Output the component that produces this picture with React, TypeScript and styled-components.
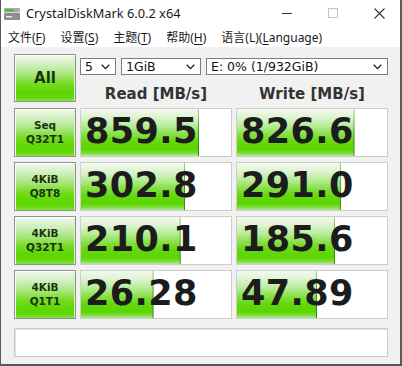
import React from "react";
import styled, { createGlobalStyle } from "styled-components";

const Global = createGlobalStyle`
  html, body { margin: 0; padding: 0; background: #ffffff; }
  body { width: 402px; height: 366px; overflow: hidden; }
`;

const Window = styled.div`
  width: 402px;
  height: 366px;
  box-sizing: border-box;
  display: flex;
  flex-direction: column;
  background: #ffffff;
  border-left: 1px solid #5a5a5a;
  border-right: 2px solid #5a5a5a;
  border-bottom: 2px solid #5a5a5a;
`;

const TitleBar = styled.div`
  height: 26px;
  display: flex;
  align-items: center;
  background: #ffffff;
`;

const AppIcon = styled.svg`
  width: 16px;
  height: 12px;
  margin-left: 3px;
  margin-top: 1px;
`;

const TitleText = styled.div`
  margin-left: 6px;
  flex: 1;
  font-family: "Noto Sans", "Open Sans", sans-serif;
  font-size: 12.8px;
  color: #1a1a1a;
  white-space: nowrap;
`;

const Controls = styled.div`
  display: flex;
  height: 100%;
  margin-right: -2px;
`;

const Control = styled.div`
  width: 46px;
  height: 100%;
  display: flex;
  align-items: center;
  justify-content: center;
`;

const MenuBar = styled.div`
  height: 21px;
  display: flex;
  align-items: center;
  gap: 15px;
  padding-left: 7px;
  background: #ffffff;
  font-family: "Noto Sans", "Noto Sans CJK SC", sans-serif;
  font-size: 12px;
  color: #1a1a1a;
`;

const MenuItem = styled.span`
  white-space: nowrap;
`;

const Key = styled.span`
  text-decoration: underline;
  text-underline-offset: 2px;
`;

const Content = styled.div`
  flex: 1;
  background: #f1f1f1;
  padding: 7px 0 0 13px;
  display: flex;
  flex-direction: column;
`;

const TopGrid = styled.div`
  display: grid;
  grid-template-columns: 62px 152px 152px;
  grid-template-rows: 21px 27px;
  column-gap: 4px;
`;

const greenButton = `
  box-sizing: border-box;
  border: 1px solid #8e948a;
  box-shadow: inset 0 1px 0 #ffffff, inset 1px 0 0 #f4fbf0, inset -1px 0 0 #d6f0c8;
  background: linear-gradient(
    to bottom,
    #f2f8ee 0%,
    #d6f1c6 18%,
    #a9e67e 42%,
    #74dc22 62%,
    #5fd604 80%,
    #62d808 92%,
    #86e046 100%
  );
  font-family: "DejaVu Sans", Verdana, sans-serif;
  font-weight: bold;
  color: #1b3410;
  display: flex;
  flex-direction: column;
  align-items: center;
  justify-content: center;
  text-align: center;
`;

const AllButton = styled.div`
  ${greenButton}
  grid-column: 1;
  grid-row: 1 / span 2;
  height: 48px;
  font-size: 15px;
  padding-bottom: 1px;
`;

const Selects = styled.div`
  grid-column: 2 / span 2;
  grid-row: 1;
  align-self: end;
  display: flex;
  gap: 5px;
`;

const Select = styled.div<{ $w: number }>`
  box-sizing: border-box;
  width: ${(p) => p.$w}px;
  height: 17px;
  background: #ffffff;
  border: 1px solid #7d7d7d;
  display: flex;
  align-items: center;
  justify-content: space-between;
  padding: 0 5px 0 4px;
  font-family: "DejaVu Sans", Verdana, sans-serif;
  font-size: 12.5px;
  color: #111111;
  white-space: nowrap;
`;

const Chevron = styled.svg`
  width: 9px;
  height: 6px;
  flex: none;
`;

const Header = styled.div<{ $col: number }>`
  grid-column: ${(p) => p.$col};
  grid-row: 2;
  align-self: end;
  margin-bottom: -1px;
  text-align: center;
  font-family: "DejaVu Sans", Verdana, sans-serif;
  font-weight: bold;
  font-size: 15px;
  line-height: 18px;
  color: #333333;
`;

const Rows = styled.div`
  margin-top: 6px;
  display: flex;
  flex-direction: column;
  gap: 5px;
`;

const Row = styled.div`
  display: grid;
  grid-template-columns: 62px 152px 152px;
  column-gap: 4px;
  height: 49px;
`;

const TestButton = styled.div`
  ${greenButton}
  font-size: 10.5px;
  line-height: 14px;
  padding-bottom: 2px;
`;

const ValueBox = styled.div<{ $pct: number }>`
  box-sizing: border-box;
  border: 1px solid #cdcdcd;
  background-color: #ffffff;
  background-repeat: no-repeat;
  background-image:
    linear-gradient(
      to bottom,
      #f2faee 0%,
      #e0f4d5 16%,
      #b8ec98 36%,
      #86e046 54%,
      #64d80c 70%,
      #5cd502 86%,
      #7adc36 94%,
      #b4eb98 100%
    ),
    linear-gradient(to bottom, #a8d090 0%, #3f8f1c 50%, #3a8818 100%);
  background-size: calc(${(p) => p.$pct}% - 1px) 100%, ${(p) => p.$pct}% 100%;
  display: flex;
  align-items: center;
  padding: 0 0 3px 4px;
  font-family: "DejaVu Sans", Verdana, sans-serif;
  font-weight: bold;
  font-size: 35px;
  line-height: 1;
  color: #1c1c1c;
  letter-spacing: 0.4px;
`;

const Comment = styled.div`
  margin-top: 9px;
  width: 374px;
  height: 29px;
  box-sizing: border-box;
  background: #ffffff;
  border: 1px solid #c9c9c9;
  box-shadow: inset 1px 1px 0 #e2e2e2;
`;

const pct = (v: number) => (Math.log10(v * 10) / 5) * 100;

const rows = [
  { l1: "Seq", l2: "Q32T1", r: "859.5", w: "826.6" },
  { l1: "4KiB", l2: "Q8T8", r: "302.8", w: "291.0" },
  { l1: "4KiB", l2: "Q32T1", r: "210.1", w: "185.6" },
  { l1: "4KiB", l2: "Q1T1", r: "26.28", w: "47.89" },
];

const Down = () => (
  <Chevron viewBox="0 0 9 6">
    <path d="M0.7 0.8 L4.5 4.6 L8.3 0.8" fill="none" stroke="#222" strokeWidth="1.3" />
  </Chevron>
);

export default function App() {
  return (
    <>
      <Global />
      <Window>
        <TitleBar>
          <AppIcon viewBox="0 0 16 12">
            <rect x="0" y="0" width="16" height="4.5" rx="0.8" fill="#a7b1a6" />
            <rect x="1" y="1" width="9" height="2.5" fill="#5db14a" />
            <rect x="0" y="5" width="16" height="7" rx="0.8" fill="#8e8e8e" />
            <rect x="2" y="8" width="6" height="1.5" fill="#e8e8e8" />
          </AppIcon>
          <TitleText>CrystalDiskMark 6.0.2 x64</TitleText>
          <Controls>
            <Control>
              <svg width="10" height="10" viewBox="0 0 10 10">
                <line x1="0" y1="5.5" x2="10" y2="5.5" stroke="#333" strokeWidth="1" />
              </svg>
            </Control>
            <Control>
              <svg width="10" height="10" viewBox="0 0 10 10">
                <rect x="0.5" y="0.5" width="9" height="9" fill="none" stroke="#c4c4c4" strokeWidth="1" />
              </svg>
            </Control>
            <Control>
              <svg width="11" height="11" viewBox="0 0 11 11">
                <path d="M0.5 0.5 L10.5 10.5 M10.5 0.5 L0.5 10.5" stroke="#333" strokeWidth="1.1" />
              </svg>
            </Control>
          </Controls>
        </TitleBar>
        <MenuBar>
          <MenuItem>文件(<Key>F</Key>)</MenuItem>
          <MenuItem>设置(<Key>S</Key>)</MenuItem>
          <MenuItem>主题(<Key>T</Key>)</MenuItem>
          <MenuItem>帮助(<Key>H</Key>)</MenuItem>
          <MenuItem>语言(L)(<Key>L</Key>anguage)</MenuItem>
        </MenuBar>
        <Content>
          <TopGrid>
            <AllButton>All</AllButton>
            <Selects>
              <Select $w={36}>5<Down /></Select>
              <Select $w={80}>1GiB<Down /></Select>
              <Select $w={182}>E: 0% (1/932GiB)<Down /></Select>
            </Selects>
            <Header $col={2}>Read [MB/s]</Header>
            <Header $col={3}>Write [MB/s]</Header>
          </TopGrid>
          <Rows>
            {rows.map((r, i) => (
              <Row key={i}>
                <TestButton>
                  <span>{r.l1}</span>
                  <span>{r.l2}</span>
                </TestButton>
                <ValueBox $pct={pct(parseFloat(r.r))}>{r.r}</ValueBox>
                <ValueBox $pct={pct(parseFloat(r.w))}>{r.w}</ValueBox>
              </Row>
            ))}
          </Rows>
          <Comment />
        </Content>
      </Window>
    </>
  );
}
